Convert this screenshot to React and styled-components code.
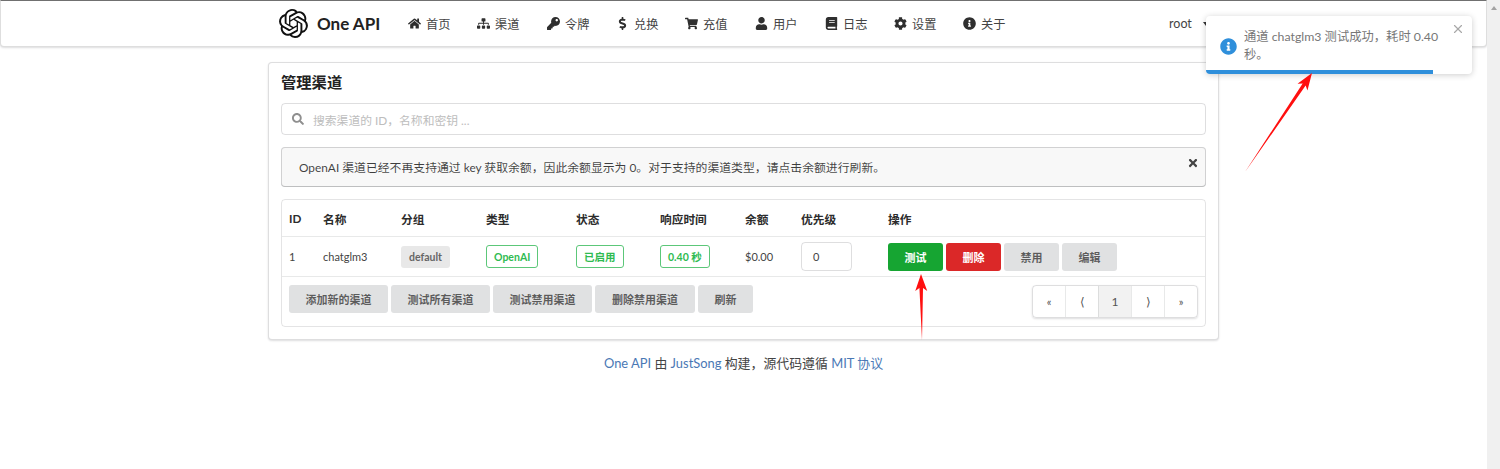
import React from 'react';
import styled, { createGlobalStyle } from 'styled-components';
import { FaHome, FaSitemap, FaKey, FaDollarSign, FaShoppingCart, FaUser, FaBook, FaCog, FaInfoCircle, FaSearch, FaTimes } from 'react-icons/fa';
import { X } from 'lucide-react';

const GlobalStyle = createGlobalStyle`
  html, body { margin: 0; padding: 0; height: 100%; overflow: hidden; background: #fff; }
  body {
    font-family: Lato, "Noto Sans CJK SC", sans-serif;
    font-size: 13px;
    color: rgba(0, 0, 0, 0.87);
  }
  * { box-sizing: border-box; }
`;

const navItems = [
  { icon: FaHome, label: '首页', width: 69 },
  { icon: FaSitemap, label: '渠道', width: 70 },
  { icon: FaKey, label: '令牌', width: 69 },
  { icon: FaDollarSign, label: '兑换', width: 69 },
  { icon: FaShoppingCart, label: '充值', width: 70 },
  { icon: FaUser, label: '用户', width: 70 },
  { icon: FaBook, label: '日志', width: 69 },
  { icon: FaCog, label: '设置', width: 69 },
  { icon: FaInfoCircle, label: '关于', width: 60 },
];

const columns = ['ID', '名称', '分组', '类型', '状态', '响应时间', '余额', '优先级', '操作'];
const gridColumns = '34px 78px 85px 90px 84px 85px 56px 87px 1fr';

const Logo = () => (
  <svg width="29" height="29" viewBox="0 0 24 24" fill="#111">
    <path d="M22.28 9.82a5.98 5.98 0 0 0-.52-4.91 6.05 6.05 0 0 0-6.51-2.9A6.07 6.07 0 0 0 4.98 4.18a5.98 5.98 0 0 0-4 2.9 6.05 6.05 0 0 0 .74 7.1 5.98 5.98 0 0 0 .51 4.91 6.05 6.05 0 0 0 6.51 2.9A5.98 5.98 0 0 0 13.26 24a6.06 6.06 0 0 0 5.77-4.21 5.99 5.99 0 0 0 4-2.9 6.06 6.06 0 0 0-.75-7.07zM13.26 22.43a4.48 4.48 0 0 1-2.88-1.04l.14-.08 4.78-2.76a.79.79 0 0 0 .39-.68v-6.74l2.02 1.17a.07.07 0 0 1 .04.05v5.58a4.5 4.5 0 0 1-4.49 4.5zM3.6 18.3a4.47 4.47 0 0 1-.53-3.01l.14.09 4.78 2.76a.77.77 0 0 0 .78 0l5.84-3.37v2.33a.08.08 0 0 1-.03.06l-4.83 2.79a4.5 4.5 0 0 1-6.15-1.65zM2.34 7.9a4.49 4.49 0 0 1 2.37-1.97v5.68a.77.77 0 0 0 .39.68l5.81 3.35-2.02 1.17a.08.08 0 0 1-.07 0l-4.83-2.79A4.5 4.5 0 0 1 2.34 7.87zm16.6 3.86-5.84-3.39 2.02-1.16a.08.08 0 0 1 .07 0l4.83 2.79a4.49 4.49 0 0 1-.68 8.1v-5.68a.79.79 0 0 0-.4-.66zm2.01-3.02-.14-.09-4.77-2.78a.78.78 0 0 0-.79 0L9.41 9.23V6.9a.07.07 0 0 1 .03-.06l4.83-2.79a4.5 4.5 0 0 1 6.68 4.66zM8.31 12.86l-2.02-1.16a.08.08 0 0 1-.04-.06V6.07a4.5 4.5 0 0 1 7.38-3.45l-.14.08L8.71 5.46a.79.79 0 0 0-.39.68zm1.1-2.37 2.6-1.5 2.61 1.5v3l-2.6 1.5-2.6-1.5z" />
  </svg>
);

const Arrow = ({ className, x1, y1, x2, y2 }) => {
  const dx = x2 - x1;
  const dy = y2 - y1;
  const len = Math.hypot(dx, dy);
  const ux = dx / len;
  const uy = dy / len;
  const px = -uy;
  const py = ux;
  const pt = (along, side) => `${x2 + ux * along + px * side},${y2 + uy * along + py * side}`;
  const points = [
    `${x1},${y1}`,
    pt(-14, 1.8),
    pt(-17, 6),
    pt(0, 0),
    pt(-17, -6),
    pt(-14, -1.8),
  ].join(' ');
  return (
    <svg className={className} width="1500" height="469" viewBox="0 0 1500 469">
      <polygon points={points} fill="#ff0f0f" />
    </svg>
  );
};

const App = () => (
  <>
    <GlobalStyle />
    <S.Page>
      <S.Main>
        <S.Navbar>
          <S.NavInner>
            <S.Brand>
              <Logo />
              <S.BrandName>One API</S.BrandName>
            </S.Brand>
            {navItems.map(({ icon: Icon, label, width }) => (
              <S.NavItem key={label} $width={width}>
                <S.NavIcon><Icon size={13} /></S.NavIcon>
                {label}
              </S.NavItem>
            ))}
            <S.UserMenu>
              root
              <S.Caret />
            </S.UserMenu>
          </S.NavInner>
        </S.Navbar>

        <S.Segment>
          <S.Title>管理渠道</S.Title>
          <S.Search>
            <FaSearch size={12} color="#8f8f8f" />
            <span>搜索渠道的 ID，名称和密钥 ...</span>
          </S.Search>
          <S.Message>
            OpenAI 渠道已经不再支持通过 key 获取余额，因此余额显示为 0。对于支持的渠道类型，请点击余额进行刷新。
            <S.MessageClose><FaTimes size={12} /></S.MessageClose>
          </S.Message>
          <S.Table>
            <S.HeadRow>
              {columns.map((c) => <div key={c}>{c}</div>)}
            </S.HeadRow>
            <S.BodyRow>
              <div>1</div>
              <div>chatglm3</div>
              <div><S.GreyLabel>default</S.GreyLabel></div>
              <div><S.GreenLabel>OpenAI</S.GreenLabel></div>
              <div><S.GreenLabel>已启用</S.GreenLabel></div>
              <div><S.GreenLabel>0.40 秒</S.GreenLabel></div>
              <div>$0.00</div>
              <div><S.PriorityInput>0</S.PriorityInput></div>
              <S.Actions>
                <S.Button $kind="green" $width={55}>测试</S.Button>
                <S.Button $kind="red" $width={55}>删除</S.Button>
                <S.Button $width={55}>禁用</S.Button>
                <S.Button $width={55}>编辑</S.Button>
              </S.Actions>
            </S.BodyRow>
            <S.FootRow>
              <S.Actions>
                <S.Button $width={99}>添加新的渠道</S.Button>
                <S.Button $width={99}>测试所有渠道</S.Button>
                <S.Button $width={99}>测试禁用渠道</S.Button>
                <S.Button $width={100}>删除禁用渠道</S.Button>
                <S.Button $width={55}>刷新</S.Button>
              </S.Actions>
              <S.Pagination>
                <S.PageItem $small>«</S.PageItem>
                <S.PageItem>⟨</S.PageItem>
                <S.PageItem $active>1</S.PageItem>
                <S.PageItem>⟩</S.PageItem>
                <S.PageItem $small>»</S.PageItem>
              </S.Pagination>
            </S.FootRow>
          </S.Table>
        </S.Segment>

        <S.Footer>
          <a>One API</a> 由 <a>JustSong</a> 构建，源代码遵循 <a>MIT 协议</a>
        </S.Footer>
      </S.Main>

      <S.Scrollbar><S.ScrollUp /></S.Scrollbar>

      <S.Toast>
        <S.ToastIcon><FaInfoCircle size={17} /></S.ToastIcon>
        <S.ToastText>通道 chatglm3 测试成功，耗时 0.40 秒。</S.ToastText>
        <S.ToastClose><X size={14} strokeWidth={2} /></S.ToastClose>
        <S.ToastProgress />
      </S.Toast>

      <S.ArrowLayer x1={1245} y1={172} x2={1312} y2={73} />
      <S.ArrowLayer x1={922} y1={340} x2={921} y2={274} />
    </S.Page>
  </>
);

const S = {
  Page: styled.div`
    position: relative;
    display: flex;
    width: 1500px;
    height: 469px;
    overflow: hidden;
  `,
  Main: styled.div`
    flex: 1;
    min-width: 0;
  `,
  Scrollbar: styled.div`
    width: 13px;
    background: #f0f0f0;
  `,
  ScrollUp: styled.div`
    width: 0;
    height: 0;
    margin: 6px auto 0;
    border-left: 3px solid transparent;
    border-right: 3px solid transparent;
    border-bottom: 4px solid #a3a3a3;
  `,
  Navbar: styled.div`
    height: 47px;
    background: #fff;
    border: 1px solid rgba(34, 36, 38, 0.15);
    border-top: 1px solid #707070;
    border-radius: 0 0 4px 4px;
    box-shadow: 0 1px 2px 0 rgba(34, 36, 38, 0.15);
  `,
  NavInner: styled.div`
    display: flex;
    align-items: center;
    height: 100%;
    padding-left: 278px;
  `,
  Brand: styled.div`
    display: flex;
    align-items: center;
    gap: 9px;
    width: 128px;
  `,
  BrandName: styled.span`
    font-size: 17px;
    font-weight: 700;
    color: #222;
  `,
  NavItem: styled.div`
    display: flex;
    align-items: center;
    width: ${(p) => p.$width}px;
    font-size: 12.2px;
    color: #444;
  `,
  NavIcon: styled.span`
    display: inline-flex;
    justify-content: center;
    width: 15px;
    margin-right: 4px;
    color: #2f2f2f;
  `,
  UserMenu: styled.div`
    display: flex;
    align-items: center;
    margin-left: 147px;
    font-size: 12.5px;
    color: #444;
  `,
  Caret: styled.span`
    width: 0;
    height: 0;
    margin-left: 11px;
    border-left: 3px solid transparent;
    border-right: 3px solid transparent;
    border-top: 4px solid #333;
  `,
  Segment: styled.div`
    width: 951px;
    height: 278px;
    margin: 15px 0 0 268px;
    padding: 10px 12px 0;
    background: #fff;
    border: 1px solid rgba(34, 36, 38, 0.15);
    border-radius: 4px;
    box-shadow: 0 1px 2px 0 rgba(34, 36, 38, 0.15);
  `,
  Title: styled.div`
    font-size: 15.3px;
    font-weight: 700;
    line-height: 19px;
    color: #222;
  `,
  Search: styled.div`
    display: flex;
    align-items: center;
    gap: 9px;
    height: 32px;
    margin-top: 11px;
    padding-left: 10px;
    border: 1px solid rgba(34, 36, 38, 0.15);
    border-radius: 4px;
    font-size: 11.8px;
    color: #bdbdbd;
  `,
  Message: styled.div`
    position: relative;
    display: flex;
    align-items: center;
    height: 40px;
    margin-top: 12px;
    padding: 0 0 1px 18px;
    background: #f8f8f8;
    border-radius: 4px;
    box-shadow: inset 0 0 0 1px rgba(34, 36, 38, 0.18), inset 0 -1px 0 rgba(34, 36, 38, 0.1);
    font-size: 11.85px;
    color: rgba(0, 0, 0, 0.75);
  `,
  MessageClose: styled.span`
    position: absolute;
    top: 10px;
    right: 7px;
    color: #444;
  `,
  Table: styled.div`
    margin-top: 12px;
    border: 1px solid rgba(34, 36, 38, 0.12);
    border-radius: 4px;
    font-size: 11px;
    color: #444;
  `,
  HeadRow: styled.div`
    display: grid;
    grid-template-columns: ${gridColumns};
    align-items: center;
    height: 37px;
    padding-left: 7px;
    font-size: 11.7px;
    font-weight: 700;
    color: #2c2c2c;
    border-bottom: 1px solid rgba(34, 36, 38, 0.1);
  `,
  BodyRow: styled.div`
    display: grid;
    grid-template-columns: ${gridColumns};
    align-items: center;
    height: 40px;
    padding-left: 7px;
    border-bottom: 1px solid rgba(34, 36, 38, 0.1);
  `,
  FootRow: styled.div`
    display: flex;
    align-items: flex-start;
    justify-content: space-between;
    height: 49px;
    padding: 8px 7px 0 7px;
  `,
  GreyLabel: styled.span`
    display: inline-flex;
    align-items: center;
    justify-content: center;
    height: 22px;
    padding: 0 8px;
    background: #e8e8e8;
    border-radius: 3px;
    font-weight: 700;
    color: #666;
    font-size: 10.5px;
  `,
  GreenLabel: styled.span`
    display: inline-flex;
    align-items: center;
    justify-content: center;
    height: 23px;
    padding: 0 7px;
    background: #fff;
    border: 1px solid #5cc779;
    border-radius: 3px;
    font-weight: 700;
    font-size: 10.5px;
    color: #2fbb52;
  `,
  PriorityInput: styled.div`
    display: flex;
    align-items: center;
    width: 51px;
    height: 29px;
    padding-left: 11px;
    border: 1px solid rgba(34, 36, 38, 0.15);
    border-radius: 4px;
  `,
  Actions: styled.div`
    display: flex;
    gap: 3px;
  `,
  Button: styled.div`
    display: flex;
    align-items: center;
    justify-content: center;
    width: ${(p) => p.$width}px;
    height: 28px;
    border-radius: 3px;
    font-size: 11px;
    font-weight: 700;
    background: ${(p) => (p.$kind === 'green' ? '#16a532' : p.$kind === 'red' ? '#db2828' : '#e0e1e2')};
    color: ${(p) => (p.$kind ? '#fff' : 'rgba(0, 0, 0, 0.6)')};
  `,
  Pagination: styled.div`
    display: flex;
    width: 166px;
    height: 33px;
    border-radius: 4px;
    border: 1px solid rgba(34, 36, 38, 0.15);
    box-shadow: 0 1px 2px 0 rgba(34, 36, 38, 0.15);
    overflow: hidden;
  `,
  PageItem: styled.div`
    display: flex;
    flex: 1;
    align-items: center;
    justify-content: center;
    font-size: ${(p) => (p.$small ? 11 : 12)}px;
    color: #555;
    background: ${(p) => (p.$active ? '#f2f2f2' : 'transparent')};
    & + & { border-left: 1px solid rgba(34, 36, 38, 0.1); }
  `,
  Footer: styled.div`
    margin-top: 13px;
    margin-left: 268px;
    width: 951px;
    text-align: center;
    font-size: 12.9px;
    line-height: 20px;
    color: #444;
    a { color: #4a78b5; }
  `,
  Toast: styled.div`
    position: absolute;
    top: 16px;
    left: 1206px;
    display: flex;
    width: 266px;
    height: 58px;
    padding: 12px 0 0 14px;
    background: #fff;
    border-radius: 4px;
    box-shadow: 0 1px 6px rgba(0, 0, 0, 0.2);
    overflow: hidden;
  `,
  ToastIcon: styled.span`
    margin-top: 10px;
    margin-right: 7px;
    color: #2f8fdb;
  `,
  ToastText: styled.div`
    width: 206px;
    font-size: 12.3px;
    line-height: 18px;
    color: #777;
  `,
  ToastClose: styled.span`
    position: absolute;
    top: 6px;
    right: 7px;
    color: #a8a8a8;
  `,
  ToastProgress: styled.div`
    position: absolute;
    left: 0;
    bottom: 0;
    width: 227px;
    height: 4px;
    background: #2f8fdb;
  `,
  ArrowLayer: styled(Arrow)`
    position: absolute;
    top: 0;
    left: 0;
    pointer-events: none;
  `,
};

export default App;
